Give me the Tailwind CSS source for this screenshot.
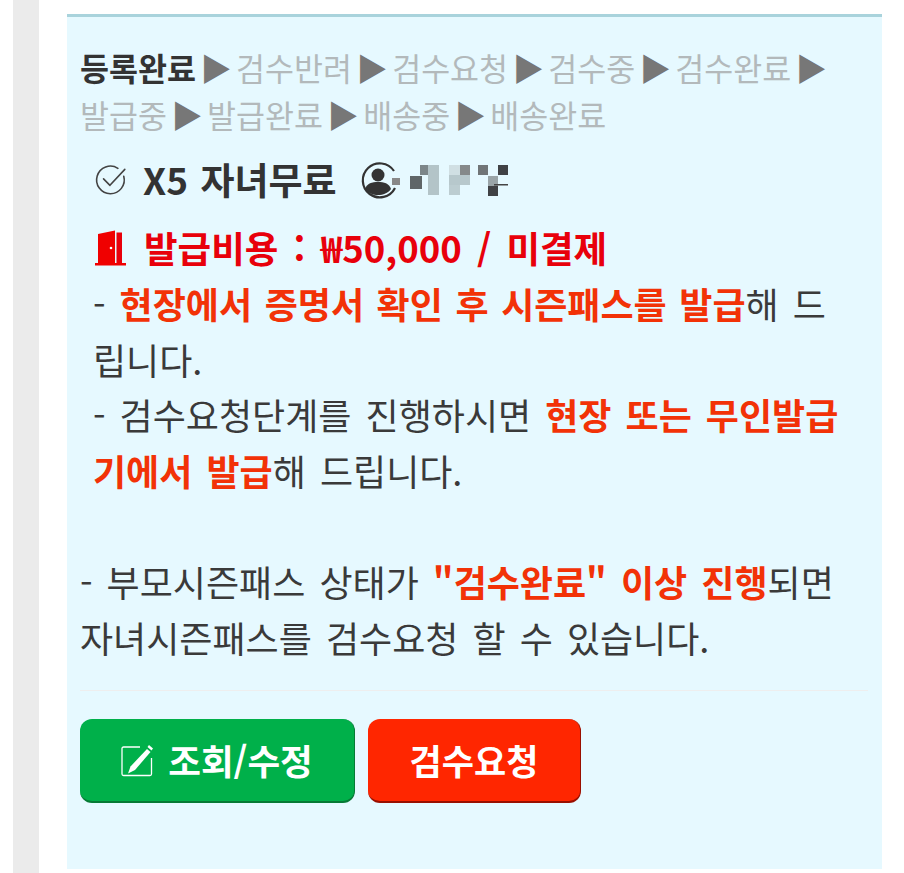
<!DOCTYPE html>
<html lang="ko">
<head>
<meta charset="UTF-8">
<title>시즌패스</title>
<script src="https://cdn.jsdelivr.net/npm/@tailwindcss/browser@4"></script>
</head>
<body class="bg-white overflow-hidden font-['Noto_Sans_CJK_KR','Noto_Sans',sans-serif]">
<div class="flex h-[873px] w-[904px] overflow-hidden">
  <!-- 왼쪽 회색 줄 -->
  <div class="ml-[13px] w-[26px] h-full bg-[#ebebeb]"></div>

  <!-- 패널 -->
  <div class="ml-[28px] mt-[14px] w-[815px] h-[855px] bg-[#e6f9ff] border-t-[3px] border-[#a9d3dc] pl-[13px] pr-[14px] text-[#3a3a3a]">
    <!-- 단계 -->
    <div class="mt-[27px] w-[780px] text-[31.500px] leading-[47px] text-[#b3b9bb] [word-spacing:-4.500px]">
      <b class="font-bold text-[#333]">등록완료</b> <span class="text-[#777]">▶</span> 검수반려 <span class="text-[#777]">▶</span> 검수요청 <span class="text-[#777]">▶</span> 검수중 <span class="text-[#777]">▶</span> 검수완료 <span class="text-[#777]">▶</span><br>
      발급중 <span class="text-[#777]">▶</span> 발급완료 <span class="text-[#777]">▶</span> 배송중 <span class="text-[#777]">▶</span> 배송완료
    </div>

    <!-- 자녀 -->
    <div class="mt-[17px] ml-[14px] h-[50px] flex items-center">
      <svg class="w-[34px] h-[34px]" viewBox="0 0 32 32" fill="none" stroke="#444" stroke-width="1.500" stroke-linecap="round" stroke-linejoin="round">
        <path d="M28 12.500A13 13 0 1 1 22.500 5"/>
        <path d="M9 15l6 6L29 6"/>
      </svg>
      <b class="ml-[15px] text-[37px] font-bold text-[#333] [word-spacing:2px]">X5 자녀무료</b>
      <svg class="ml-[22px] w-[156px] h-[40px]" viewBox="0 0 156 40">
        <path d="M35 11A17 17 0 1 0 36 28" fill="none" stroke="#333" stroke-width="2.200"/>
        <circle cx="19" cy="15" r="6.500" fill="#333"/>
        <path d="M6 29c2-6 7-7 13-7s11 1 13 7c-3 4-8 6-13 6s-10-2-13-6z" fill="#333"/>
        <g filter="url(#mosaic)">
          <rect x="33" y="18" width="8" height="7" fill="#888"/>
          <rect x="51" y="16" width="12" height="13" fill="#5f6668"/>
          <rect x="61" y="5" width="10" height="10" fill="#7c8689"/>
          <rect x="69" y="5" width="11" height="30" fill="#b3c4c8"/>
          <rect x="90" y="5" width="11" height="10" fill="#d0dfe3"/>
          <rect x="101" y="5" width="10" height="10" fill="#85898a"/>
          <rect x="90" y="15" width="21" height="10" fill="#b7c8cc"/>
          <rect x="90" y="25" width="11" height="10" fill="#bccdd1"/>
          <rect x="119" y="5" width="10" height="10" fill="#707577"/>
          <rect x="139" y="5" width="10" height="10" fill="#3f4345"/>
          <rect x="129" y="16" width="10" height="10" fill="#9aa5a8"/>
          <rect x="129" y="26" width="10" height="10" fill="#3f4345"/>
          <rect x="135" y="24" width="14" height="1.500" fill="#444"/>
        </g>
        <defs><filter id="mosaic"><feGaussianBlur stdDeviation="0.6"/></filter></defs>
      </svg>
    </div>

    <!-- 발급비용 -->
    <div class="mt-[18px] ml-[14px] w-[780px] text-[36px] leading-[55.500px] [word-spacing:4px]">
      <div class="flex items-center h-[50px] font-bold">
        <svg class="w-[33px] h-[38px]" viewBox="0 0 33 38" fill="#f00000">
          <path d="M4 5L21 1.500V34H4z"/>
          <path d="M22.500 3.500h5.500V34h-5.500z" fill="#e8000b"/>
          <path d="M1 34h31v2.500H1z"/>
          <circle cx="17" cy="19" r="1.300" fill="#fff"/>
        </svg>
        <span class="ml-[17px] text-[36.500px] [word-spacing:5px] text-[#e8000b]">발급비용 : ₩50,000 / 미결제</span>
      </div>
      <div class="-ml-px mt-[3px]">
        - <b class="font-bold text-[#f23207] [word-spacing:2.500px]">현장에서 증명서 확인 후 시즌패스를 발급</b>해 드<br>
        립니다.<br>
        - 검수요청단계를 진행하시면 <b class="font-bold text-[#f23207]">현장 또는 무인발급<br>기에서 발급</b>해 드립니다.
      </div>
    </div>

    <!-- 안내 -->
    <div class="mt-[55px] w-[790px] text-[36px] leading-[56px] [word-spacing:4px]">
      - 부모시즌패스 상태가 <b class="font-bold text-[#f23207]">"검수완료" 이상 진행</b>되면<br>
      자녀시즌패스를 검수요청 할 수 있습니다.
    </div>

    <div class="mt-[25px] border-t border-[#eeeeee]"></div>

    <!-- 버튼 -->
    <div class="mt-[28px] flex gap-[13px]">
      <button class="flex items-center justify-center w-[275px] h-[84px] rounded-[12px] bg-[#00b04a] border-b-2 border-r border-[#067a35] text-white text-[35.500px] font-bold">
        <svg class="w-[33px] h-[33px] mr-[14px]" viewBox="0 0 33 33" fill="none">
          <path d="M19 3H2.500a1.500 1.500 0 0 0-1.500 1.500V30a1.500 1.500 0 0 0 1.500 1.500H29a1.500 1.500 0 0 0 1.500-1.500V14" stroke="#fff" stroke-width="1.300"/>
          <path d="M26 5l3.500 3L14 26l-7 3.500 2.500-7z" fill="#fff"/>
          <path d="M28 1l4 3.500-1.500 2-4-3.500z" fill="#fff"/>
        </svg>
        조회/수정
      </button>
      <button class="w-[213px] h-[84px] rounded-[12px] bg-[#ff2600] border-b-2 border-r border-[#990f00] text-white text-[35px] font-bold">검수요청</button>
    </div>
  </div>
</div>
</body>
</html>
